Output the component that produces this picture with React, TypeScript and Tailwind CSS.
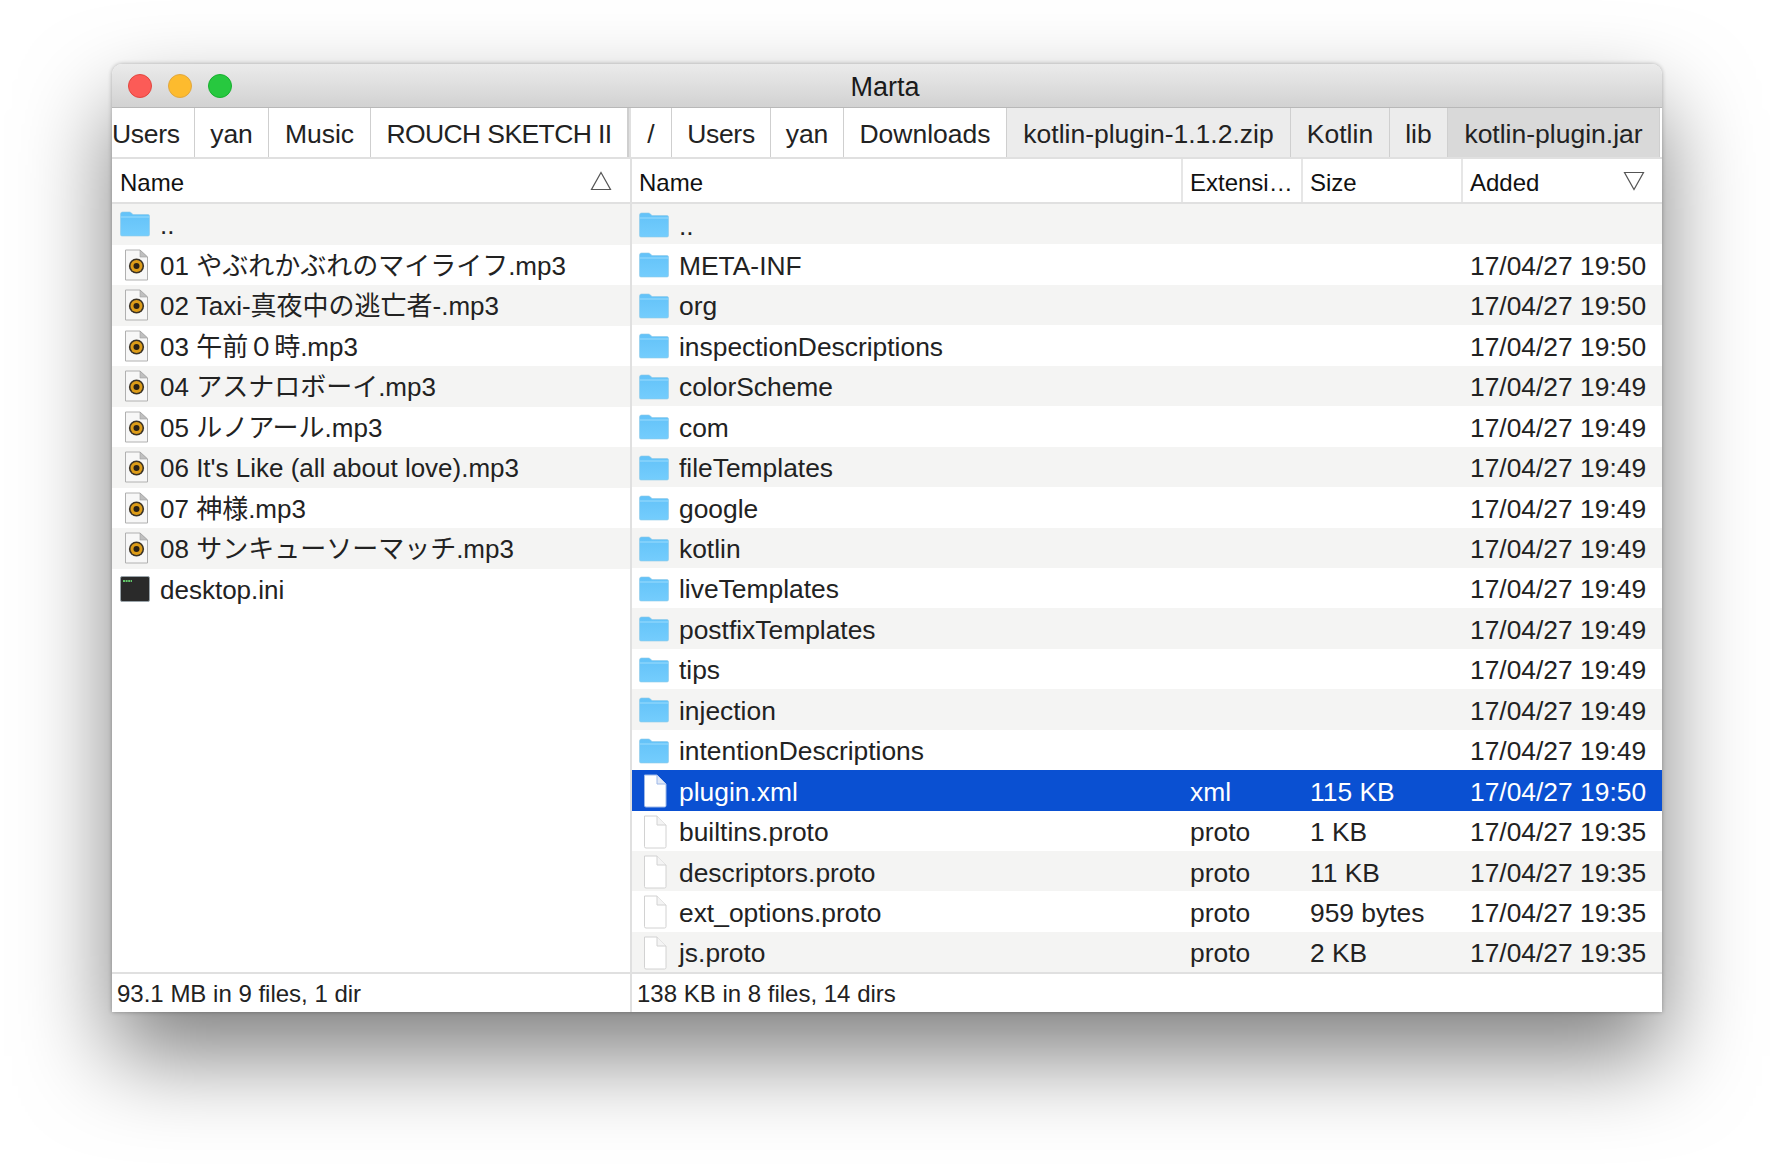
import React from "react";

type FileRow = {
  name: string;
  kind: "folder" | "doc" | "mp3" | "term";
  ext?: string;
  size?: string;
  added?: string;
};

const leftTabs = [
  { label: "Users", className: "w-[83px] justify-start tracking-[-0.3px]" },
  { label: "yan", className: "w-[74px] justify-center" },
  { label: "Music", className: "w-[102px] justify-center" },
  { label: "ROUCH SKETCH II", className: "w-[257px] justify-center tracking-[-0.6px]" },
];

const rightTabs = [
  { label: "/", className: "w-[41px] bg-white" },
  { label: "Users", className: "w-[99px] bg-white tracking-[-0.3px]" },
  { label: "yan", className: "w-[73px] bg-white" },
  { label: "Downloads", className: "w-[163px] bg-white" },
  { label: "kotlin-plugin-1.1.2.zip", className: "w-[284px] bg-[#ececec]" },
  { label: "Kotlin", className: "w-[99px] bg-[#ececec]" },
  { label: "lib", className: "w-[58px] bg-[#ececec]" },
  { label: "kotlin-plugin.jar", className: "w-[212px] bg-[#d9d9d9]" },
];

const leftRows: FileRow[] = [
  { name: "..", kind: "folder" },
  { name: "01 やぶれかぶれのマイライフ.mp3", kind: "mp3" },
  { name: "02 Taxi-真夜中の逃亡者-.mp3", kind: "mp3" },
  { name: "03 午前０時.mp3", kind: "mp3" },
  { name: "04 アスナロボーイ.mp3", kind: "mp3" },
  { name: "05 ルノアール.mp3", kind: "mp3" },
  { name: "06 It's Like (all about love).mp3", kind: "mp3" },
  { name: "07 神様.mp3", kind: "mp3" },
  { name: "08 サンキューソーマッチ.mp3", kind: "mp3" },
  { name: "desktop.ini", kind: "term" },
];

const rightRows: FileRow[] = [
  { name: "..", kind: "folder" },
  { name: "META-INF", kind: "folder", added: "17/04/27 19:50" },
  { name: "org", kind: "folder", added: "17/04/27 19:50" },
  { name: "inspectionDescriptions", kind: "folder", added: "17/04/27 19:50" },
  { name: "colorScheme", kind: "folder", added: "17/04/27 19:49" },
  { name: "com", kind: "folder", added: "17/04/27 19:49" },
  { name: "fileTemplates", kind: "folder", added: "17/04/27 19:49" },
  { name: "google", kind: "folder", added: "17/04/27 19:49" },
  { name: "kotlin", kind: "folder", added: "17/04/27 19:49" },
  { name: "liveTemplates", kind: "folder", added: "17/04/27 19:49" },
  { name: "postfixTemplates", kind: "folder", added: "17/04/27 19:49" },
  { name: "tips", kind: "folder", added: "17/04/27 19:49" },
  { name: "injection", kind: "folder", added: "17/04/27 19:49" },
  { name: "intentionDescriptions", kind: "folder", added: "17/04/27 19:49" },
  { name: "plugin.xml", kind: "doc", ext: "xml", size: "115 KB", added: "17/04/27 19:50" },
  { name: "builtins.proto", kind: "doc", ext: "proto", size: "1 KB", added: "17/04/27 19:35" },
  { name: "descriptors.proto", kind: "doc", ext: "proto", size: "11 KB", added: "17/04/27 19:35" },
  { name: "ext_options.proto", kind: "doc", ext: "proto", size: "959 bytes", added: "17/04/27 19:35" },
  { name: "js.proto", kind: "doc", ext: "proto", size: "2 KB", added: "17/04/27 19:35" },
];

const FolderIcon = () => (
  <svg width="30" height="26" viewBox="0 0 30 26">
    <defs>
      <linearGradient id="folderFill" x1="0" y1="0" x2="0" y2="1">
        <stop offset="0" stopColor="#63c2f8" />
        <stop offset="1" stopColor="#74cdfd" />
      </linearGradient>
    </defs>
    <path d="M0.5 3 Q0.5 1 2.5 1 H9.5 Q11 1 12 2.5 L13 3.5 H28 Q29.5 3.5 29.5 5 V23.5 Q29.5 25 28 25 H2 Q0.5 25 0.5 23.5 Z" fill="url(#folderFill)" stroke="#8fc9e8" strokeWidth="0.6" />
    <path d="M0.5 6 H29.5" stroke="#9bdcfd" strokeWidth="1" />
  </svg>
);

const DocIcon = ({ selected }: { selected?: boolean }) => (
  <svg width="30" height="34" viewBox="0 0 30 34">
    <path d="M5.5 1 H18 L27 10 V31.5 Q27 33 25.5 33 H7 Q5.5 33 5.5 31.5 Z" fill="#fff" stroke={selected ? "#9db8e8" : "#d2d2d2"} strokeWidth="1" />
    <path d="M18 1 V10 H27" fill={selected ? "#dfe7f6" : "#f4f4f4"} stroke={selected ? "#9db8e8" : "#d2d2d2"} strokeWidth="1" />
  </svg>
);

const Mp3Icon = () => (
  <svg width="30" height="32" viewBox="0 0 30 32">
    <path d="M5.5 1 H20 L27.5 8 V31 H5.5 Z" fill="#f7f7f7" stroke="#b0b0b0" strokeWidth="1" />
    <path d="M20 1 L20 8 H27.5 Z" fill="#bfbfbf" stroke="#a0a0a0" strokeWidth="0.6" />
    <circle cx="16.5" cy="17" r="7.6" fill="#3a3226" />
    <circle cx="16.5" cy="17" r="6" fill="#dd9c18" />
    <circle cx="16.5" cy="17" r="3" fill="#2a2116" />
  </svg>
);

const TermIcon = () => (
  <svg width="30" height="26" viewBox="0 0 30 26">
    <rect x="0.5" y="0.5" width="29" height="25" rx="1.5" fill="#2a2a2a" stroke="#9aa4aa" strokeWidth="1" />
    <path d="M3 5 H12" stroke="#63c76a" strokeWidth="2" strokeDasharray="2 0.6" />
  </svg>
);

const RowIcon = ({ kind, selected }: { kind: FileRow["kind"]; selected?: boolean }) => {
  if (kind === "folder") return <FolderIcon />;
  if (kind === "mp3") return <Mp3Icon />;
  if (kind === "term") return <TermIcon />;
  return <DocIcon selected={selected} />;
};

const UpTriangle = () => (
  <svg width="22" height="20" viewBox="0 0 22 20">
    <path d="M11 1.5 L20.5 18.5 H1.5 Z" fill="none" stroke="#555" strokeWidth="1.2" />
  </svg>
);

const DownTriangle = () => (
  <svg width="22" height="20" viewBox="0 0 22 20">
    <path d="M1.5 1.5 H20.5 L11 18.5 Z" fill="none" stroke="#555" strokeWidth="1.2" />
  </svg>
);

const App = () => {
  return (
    <div
      className="h-[1172px] w-[1774px] overflow-hidden bg-white pl-[112px] pt-[64px] text-[#222]"
      style={{ fontFamily: '"Liberation Sans", "Noto Sans CJK JP", sans-serif' }}
    >
      <div className="flex h-[948px] w-[1550px] flex-col rounded-t-[10px] bg-white shadow-[0_44px_90px_rgba(0,0,0,0.5),0_0_4px_rgba(0,0,0,0.3)]">
        {/* title bar */}
        <div className="relative flex h-[44px] shrink-0 items-center rounded-t-[10px] border-b border-[#b8b8b8] bg-gradient-to-b from-[#ebebeb] to-[#d2d2d2] pl-[16px]">
          <div className="flex gap-[16px]">
            <span className="h-[24px] w-[24px] rounded-full border border-[#e2463f] bg-[#fc5b57]" />
            <span className="h-[24px] w-[24px] rounded-full border border-[#e1a73e] bg-[#fdbb2e]" />
            <span className="h-[24px] w-[24px] rounded-full border border-[#17b02f] bg-[#27c83f]" />
          </div>
          <div className="absolute inset-0 flex items-center justify-center pr-[4px] pt-[4px] text-[27px] text-[#1a1a1a]">Marta</div>
        </div>

        {/* tabs */}
        <div className="flex h-[51px] shrink-0 border-b-2 border-[#e0e0e0] text-[26.5px]">
          <div className="flex w-[517px] shrink-0 border-r border-[#cfcfcf]">
            {leftTabs.map((tab, i) => (
              <div
                key={i}
                className={`flex shrink-0 items-center whitespace-nowrap border-r border-[#cfcfcf] pt-[4px] ${tab.className}`}
              >
                {tab.label}
              </div>
            ))}
          </div>
          <div className="flex flex-1 border-l-2 border-[#e0e0e0] pr-[3px]">
            {rightTabs.map((tab, i) => (
              <div
                key={i}
                className={`flex shrink-0 items-center justify-center whitespace-nowrap border-r border-[#cfcfcf] pt-[4px] ${tab.className}`}
              >
                {tab.label}
              </div>
            ))}
          </div>
        </div>

        <div className="flex min-h-0 flex-1">
          {/* left pane */}
          <div className="flex w-[518px] shrink-0 flex-col">
            <div className="flex h-[45px] shrink-0 items-center justify-between border-b-2 border-[#e0e0e0] pl-[8px] pr-[18px] text-[24px] text-[#111]">
              <span className="pt-[5px]">Name</span>
              <UpTriangle />
            </div>
            <div className="min-h-0 flex-1 text-[26px]">
              {leftRows.map((row, i) => (
                <div
                  key={i}
                  className={`flex h-[40.5px] items-center whitespace-nowrap pl-[8px] ${i % 2 === 0 ? "bg-[#f4f4f3]" : "bg-white"}`}
                >
                  <span className="flex w-[30px] shrink-0 justify-center">
                    <RowIcon kind={row.kind} />
                  </span>
                  <span className="ml-[10px] pt-[3px]">{row.name}</span>
                </div>
              ))}
            </div>
            <div className="flex h-[40px] shrink-0 items-center border-t-2 border-[#e0e0e0] pl-[5px] pt-[2px] text-[24px]">
              93.1 MB in 9 files, 1 dir
            </div>
          </div>

          {/* right pane */}
          <div className="flex flex-1 flex-col border-l-2 border-[#e0e0e0]">
            <div className="grid h-[45px] shrink-0 grid-cols-[551px_120px_160px_1fr] items-stretch border-b-2 border-[#e0e0e0] text-[24px] text-[#111]">
              <div className="flex items-center border-r-2 border-[#e6e6e6] pl-[7px] pt-[5px]">Name</div>
              <div className="flex items-center whitespace-nowrap border-r-2 border-[#e6e6e6] pl-[7px] pt-[5px]">Extensi…</div>
              <div className="flex items-center border-r-2 border-[#e6e6e6] pl-[7px] pt-[5px]">Size</div>
              <div className="flex items-center justify-between pl-[7px] pr-[17px]">
                <span className="pt-[5px]">Added</span>
                <DownTriangle />
              </div>
            </div>
            <div className="min-h-0 flex-1 text-[26.4px]">
              {rightRows.map((row, i) => {
                const selected = row.name === "plugin.xml";
                return (
                  <div
                    key={i}
                    className={`grid h-[40.45px] grid-cols-[551px_120px_160px_1fr] items-center whitespace-nowrap ${
                      selected ? "bg-[#0a50d2] text-white" : i % 2 === 0 ? "bg-[#f4f4f3]" : "bg-white"
                    }`}
                  >
                    <div className="flex items-center pl-[7px]">
                      <span className="flex w-[30px] shrink-0 justify-center">
                        <RowIcon kind={row.kind} selected={selected} />
                      </span>
                      <span className="ml-[10px] pt-[2.5px]">{row.name}</span>
                    </div>
                    <div className="pl-[7px] pt-[2.5px]">{row.ext}</div>
                    <div className="pl-[7px] pt-[2.5px]">{row.size}</div>
                    <div className="pl-[7px] pt-[2.5px]">{row.added}</div>
                  </div>
                );
              })}
            </div>
            <div className="flex h-[40px] shrink-0 items-center border-t-2 border-[#e0e0e0] pl-[5px] pt-[2px] text-[24px]">
              138 KB in 8 files, 14 dirs
            </div>
          </div>
        </div>
      </div>
    </div>
  );
};

export default App;
